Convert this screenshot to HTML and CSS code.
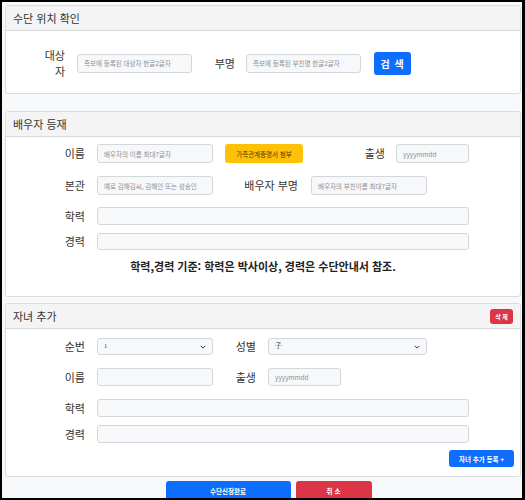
FILE: index.html
```html
<!DOCTYPE html>
<html lang="ko">
<head>
<meta charset="utf-8">
<title>수단 신청</title>
<link rel="stylesheet" href="styles.css">
</head>
<body>
<div class="frame">

  <section class="card card-locate">
    <header class="card-head">수단 위치 확인</header>
    <div class="card-body">
      <div class="row row-search">
        <label class="lbl lbl-narrow">대상 자</label>
        <input class="field w115" placeholder="족보에 등록된 대상자 한글2글자">
        <label class="lbl lbl-bm">부명</label>
        <input class="field w115" placeholder="족보에 등록된 부친명 한글2글자">
        <button class="btn btn-blue btn-search">검 색</button>
      </div>
    </div>
  </section>

  <section class="card card-spouse">
    <header class="card-head">배우자 등재</header>
    <div class="card-body">
      <div class="row r1">
        <label class="lbl lbl-main">이름</label>
        <input class="field w116" placeholder="배우자의 이름 최대7글자">
        <button class="btn btn-yellow">가족관계증명서 첨부</button>
        <label class="lbl lbl-birth">출생</label>
        <input class="field w73" placeholder="yyyymmdd">
      </div>
      <div class="row r2">
        <label class="lbl lbl-main">본관</label>
        <input class="field w116" placeholder="예로 김해김씨, 김해인 또는 성송인">
        <label class="lbl lbl-spf">배우자 부명</label>
        <input class="field w116" placeholder="배우자의 부친이름 최대7글자">
      </div>
      <div class="row r3">
        <label class="lbl lbl-main">학력</label>
        <input class="field wfull">
      </div>
      <div class="row r4">
        <label class="lbl lbl-main">경력</label>
        <input class="field wfull">
      </div>
      <p class="note">학력,경력 기준: 학력은 박사이상, 경력은 수단안내서 참조.</p>
    </div>
  </section>

  <section class="card card-child">
    <header class="card-head head-split">
      <span>자녀 추가</span>
      <button class="btn btn-red btn-del">삭 제</button>
    </header>
    <div class="card-body">
      <div class="row c1">
        <label class="lbl lbl-main">순번</label>
        <div class="select w116"><span>1</span><svg viewBox="0 0 8 5" width="6" height="4"><path d="M1 1l3 3 3-3" fill="none" stroke="#343a40" stroke-width="1.3"/></svg></div>
        <label class="lbl lbl-sex">성별</label>
        <div class="select w159"><span>子</span><svg viewBox="0 0 8 5" width="6" height="4"><path d="M1 1l3 3 3-3" fill="none" stroke="#343a40" stroke-width="1.3"/></svg></div>
      </div>
      <div class="row c2">
        <label class="lbl lbl-main">이름</label>
        <input class="field w116">
        <label class="lbl lbl-sex">출생</label>
        <input class="field w73" placeholder="yyyymmdd">
      </div>
      <div class="row c3">
        <label class="lbl lbl-main">학력</label>
        <input class="field wfull">
      </div>
      <div class="row c4">
        <label class="lbl lbl-main">경력</label>
        <input class="field wfull">
      </div>
      <div class="add-line">
        <button class="btn btn-blue btn-add">자녀 추가 등록 +</button>
      </div>
    </div>
  </section>

  <div class="actions">
    <button class="btn btn-blue btn-submit">수단신청완료</button>
    <button class="btn btn-red btn-cancel">취 소</button>
  </div>

</div>
</body>
</html>
```

FILE: styles.css
```css
* { box-sizing: border-box; }

html, body {
  margin: 0;
  padding: 0;
  width: 525px;
  height: 500px;
  overflow: hidden;
  background: #fff;
}

body {
  font-family: "Noto Sans CJK KR", "Noto Sans", sans-serif;
  color: #212529;
  font-size: 11px;
}

.frame {
  width: 525px;
  height: 500px;
  border: 2px solid #000;
  border-right-width: 3px;
  background: #f6f8fa;
  padding: 3px 1px 0 3px;
  overflow: hidden;
}

/* cards */
.card {
  background: #fff;
  border: 1px solid #dcdcdc;
  border-radius: 3px;
  width: 516px;
}

.card-head {
  height: 25px;
  background: #f4f4f4;
  border-bottom: 1px solid #d8d8d8;
  padding-left: 7px;
  display: flex;
  align-items: center;
  font-size: 11px;
  color: #333;
  line-height: 1;
}

.head-split {
  justify-content: space-between;
  padding-right: 7px;
}

.card-locate { height: 89px; }
.card-spouse { height: 186px; margin-top: 17px; }
.card-child  { height: 174px; margin-top: 6px; }

.card-body { position: relative; }

/* rows */
.row {
  display: flex;
  align-items: center;
}

.lbl {
  font-size: 11px;
  color: #333;
  text-align: right;
  line-height: 1.1;
  flex: none;
}

.lbl-main   { width: 79px; margin-right: 12px; }
.lbl-narrow { width: 59px; margin-right: 12px; padding-left: 37px; line-height: 16px; }
.lbl-bm     { width: 43px; margin-right: 11px; }
.lbl-birth  { width: 82px; margin-right: 11px; }
.lbl-spf    { width: 85px; margin-right: 13px; }
.lbl-sex    { width: 43px; margin-right: 12px; }

.field, .select {
  height: 19px;
  border: 1px solid #d3d7dc;
  border-radius: 3px;
  background: #f7f8fa;
  font-family: inherit;
  font-size: 6.5px;
  padding: 0 6px;
  color: #495057;
  flex: none;
  outline: none;
}

.field::placeholder { color: #8a8f95; }

.w115  { width: 115px; }
.w116  { width: 116px; }
.w73   { width: 73px; }
.w159  { width: 159px; }
.wfull { width: 372px; }

.select {
  display: flex;
  align-items: center;
  justify-content: space-between;
  padding: 0 6px 0 6px;
  font-family: "Liberation Serif", serif;
  font-size: 6.5px;
  color: #333;
}

.select span { line-height: 1; }

/* buttons */
.btn {
  border: 0;
  border-radius: 3px;
  font-family: inherit;
  color: #fff;
  padding: 0;
  flex: none;
  cursor: pointer;
}

.btn-blue   { background: #0d6efd; }
.btn-red    { background: #dc3545; }
.btn-yellow { background: #ffc107; color: #4a3a00; }

.btn-search {
  width: 37px;
  height: 23px;
  margin-left: 13px;
  font-size: 10px;
  font-weight: 700;
  letter-spacing: 1px;
}

.btn-yellow {
  width: 78px;
  height: 19px;
  margin-left: 12px;
  font-size: 6.5px;
}

.btn-del {
  width: 23px;
  height: 15px;
  font-size: 6px;
  font-weight: 700;
}

.btn-add {
  width: 65px;
  height: 17px;
  font-size: 6.5px;
  font-weight: 700;
}

/* card 1 */
.row-search { padding-top: 16px; }

/* card 2 */
.r1 { margin-top: 7px; }
.r2 { margin-top: 13px; }
.r3 { margin-top: 12px; height: 18px; }
.r4 { margin-top: 8px; height: 17px; }
.r3 .field, .r4 .field { height: 100%; }

.note {
  margin: 8px 0 0;
  text-align: center;
  font-size: 11px;
  font-weight: 700;
  color: #222;
  padding-right: 0;
}

/* card 3 */
.c1 { margin-top: 9px; }
.c1 .select { height: 17px; }
.c2 { margin-top: 13px; }
.c2 .field { height: 18px; }
.c3 { margin-top: 13px; }
.c3 .field, .c4 .field { height: 18px; }
.c4 { margin-top: 8px; }

.add-line {
  display: flex;
  justify-content: flex-end;
  padding-right: 6px;
  margin-top: 7px;
}

/* footer actions */
.actions {
  display: flex;
  justify-content: center;
  gap: 5px;
  margin-top: 4px;
  padding-left: 11px;
}

.btn-submit {
  width: 125px;
  height: 24px;
  font-size: 6.5px;
  font-weight: 700;
  padding-bottom: 4px;
}

.btn-cancel {
  width: 76px;
  height: 24px;
  font-size: 6.5px;
  font-weight: 700;
  padding-bottom: 4px;
}
```
